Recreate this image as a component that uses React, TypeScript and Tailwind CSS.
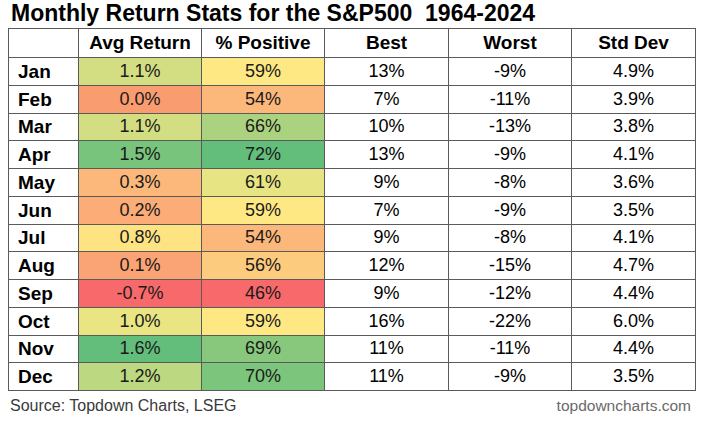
const rows = [
  { m: "Jan", avg: "1.1%", avgBg: "bg-[#d2de81]", pos: "59%", posBg: "bg-[#fee883]", best: "13%", worst: "-9%", sd: "4.9%" },
  { m: "Feb", avg: "0.0%", avgBg: "bg-[#f99c70]", pos: "54%", posBg: "bg-[#fcb77a]", best: "7%", worst: "-11%", sd: "3.9%" },
  { m: "Mar", avg: "1.1%", avgBg: "bg-[#d2de81]", pos: "66%", posBg: "bg-[#abd37f]", best: "10%", worst: "-13%", sd: "3.8%" },
  { m: "Apr", avg: "1.5%", avgBg: "bg-[#79c47c]", pos: "72%", posBg: "bg-[#63be7b]", best: "13%", worst: "-9%", sd: "4.1%" },
  { m: "May", avg: "0.3%", avgBg: "bg-[#fcb87a]", pos: "61%", posBg: "bg-[#e7e483]", best: "9%", worst: "-8%", sd: "3.6%" },
  { m: "Jun", avg: "0.2%", avgBg: "bg-[#fbac77]", pos: "59%", posBg: "bg-[#fee883]", best: "7%", worst: "-9%", sd: "3.5%" },
  { m: "Jul", avg: "0.8%", avgBg: "bg-[#fee382]", pos: "54%", posBg: "bg-[#fcb77a]", best: "9%", worst: "-8%", sd: "4.1%" },
  { m: "Aug", avg: "0.1%", avgBg: "bg-[#faa374]", pos: "56%", posBg: "bg-[#fdcb7e]", best: "12%", worst: "-15%", sd: "4.7%" },
  { m: "Sep", avg: "-0.7%", avgBg: "bg-[#f8696b]", pos: "46%", posBg: "bg-[#f8696b]", best: "9%", worst: "-12%", sd: "4.4%" },
  { m: "Oct", avg: "1.0%", avgBg: "bg-[#e9e583]", pos: "59%", posBg: "bg-[#fee883]", best: "16%", worst: "-22%", sd: "6.0%" },
  { m: "Nov", avg: "1.6%", avgBg: "bg-[#63be7b]", pos: "69%", posBg: "bg-[#87c87d]", best: "11%", worst: "-11%", sd: "4.4%" },
  { m: "Dec", avg: "1.2%", avgBg: "bg-[#bcd880]", pos: "70%", posBg: "bg-[#7bc57c]", best: "11%", worst: "-9%", sd: "3.5%" },
];

const cell = "border border-[#5a5a5a] text-center p-0";

export default function App() {
  return (
    <div className="w-[705px] h-[421px] bg-white text-black font-['Liberation_Sans',Arial,sans-serif] overflow-hidden">
      <div className="h-[28px] pl-[11px] text-[23px] leading-[27px] font-bold whitespace-pre">
        Monthly Return Stats for the S&amp;P500  1964-2024
      </div>
      <table className="ml-[8px] border-collapse table-fixed w-[687px]">
        <colgroup>
          <col className="w-[70px]" />
          <col className="w-[123px]" />
          <col className="w-[123px]" />
          <col className="w-[124px]" />
          <col className="w-[123px]" />
          <col className="w-[124px]" />
        </colgroup>
        <thead>
          <tr className="h-[29px] text-[19px] leading-[22px] font-bold">
            <th className={cell}></th>
            <th className={cell}>Avg Return</th>
            <th className={cell}>% Positive</th>
            <th className={cell}>Best</th>
            <th className={cell}>Worst</th>
            <th className={cell}>Std Dev</th>
          </tr>
        </thead>
        <tbody className="text-[18px] leading-[21px]">
          {rows.map((r) => (
            <tr key={r.m} className="h-[27.75px]">
              <td className="border border-[#5a5a5a] p-0 pl-[9px] text-left font-bold text-[19px]">{r.m}</td>
              <td className={`${cell} ${r.avgBg} text-[#1a1a1a]`}>{r.avg}</td>
              <td className={`${cell} ${r.posBg} text-[#1a1a1a]`}>{r.pos}</td>
              <td className={cell}>{r.best}</td>
              <td className={cell}>{r.worst}</td>
              <td className={cell}>{r.sd}</td>
            </tr>
          ))}
        </tbody>
      </table>
      <div className="flex justify-between items-center pl-[10px] pr-[14px] mt-[5px] text-[16px] leading-[20px]">
        <span className="text-[#3a3a3a]">Source: Topdown Charts, LSEG</span>
        <span className="text-[#6a6a6a] text-[15.5px]">topdowncharts.com</span>
      </div>
    </div>
  );
}
